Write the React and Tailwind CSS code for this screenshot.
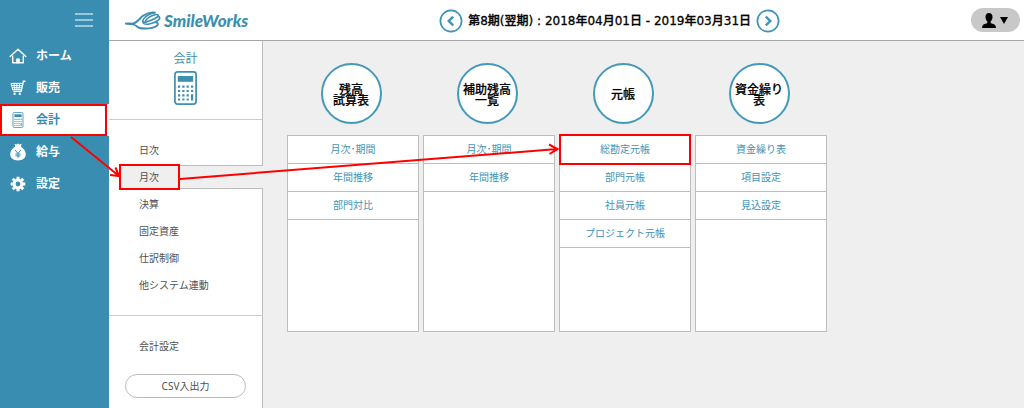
import React from "react";

function HomeIcon() {
  return (
    <svg viewBox="0 0 18 16" className="h-4 w-[18px]" fill="none" stroke="currentColor" strokeWidth="1.4" strokeLinejoin="round" strokeLinecap="round">
      <path d="M1.2 8.6 9 1.2l7.8 7.4M3.7 8.2v6.6h10.6V8.2" />
      <path d="M7.4 14.6v-3.8h3.2v3.8z" fill="currentColor" strokeWidth="0.6" />
    </svg>
  );
}

function CartIcon() {
  return (
    <svg viewBox="0 0 16 16" className="size-4" fill="none" stroke="currentColor" strokeWidth="1">
      <path d="M15.4 1.2h-2l-2.2 10.2H3.4" strokeWidth="1.4" />
      <path d="M.9 3.4h11.6M1.5 5.6h10.6M2.2 7.7h9.5M2.8 9.6h8.6" />
      <path d="M1 3.4l2 7M4 3.4l.9 7M6.8 3.4v7M9.6 3.4l-.7 7" />
      <circle cx="4.6" cy="13.8" r="1.2" fill="currentColor" stroke="none" />
      <circle cx="9.8" cy="13.8" r="1.2" fill="currentColor" stroke="none" />
    </svg>
  );
}

function CalculatorIcon({ className }) {
  return (
    <svg viewBox="0 0 23 34" className={className}>
      <rect x="0.9" y="0.9" width="21.2" height="32.2" rx="2.6" fill="white" stroke="currentColor" strokeWidth="1.7" />
      <rect x="3.8" y="5" width="15.4" height="5.8" fill="currentColor" />
      <path
        fill="currentColor"
        d="M4 14.6h2.2v2.2H4zM8.3 14.6h2.2v2.2H8.3zM12.6 14.6h2.2v2.2h-2.2zM17 14.6h2.2v2.2H17zM4 18.9h2.2v2.2H4zM8.3 18.9h2.2v2.2H8.3zM12.6 18.9h2.2v2.2h-2.2zM17 18.9h2.2v2.2H17zM4 23.2h2.2v2.2H4zM8.3 23.2h2.2v2.2H8.3zM12.6 23.2h2.2v2.2h-2.2zM4 27.4h2.2v2.2H4zM8.3 27.4h2.2v2.2H8.3zM12.6 27.4h2.2v2.2h-2.2zM17 23.2h2.2v6.4H17z"
      />
    </svg>
  );
}

function MoneyBagIcon() {
  return (
    <svg viewBox="0 0 16 18" className="h-[18px] w-4">
      <path d="M4.6.8 6.4 1.6 8 .6l1.6 1L11.6.8 10.8 4H5.2z" fill="currentColor" />
      <path d="M5 3.8h6c2.8 1.8 4.8 4.4 4.8 7.5 0 3.9-3.2 6.2-7.8 6.2S.2 15.2.2 11.3c0-3.1 2-5.7 4.8-7.5z" fill="currentColor" />
      <path d="M5.2 7 8 10.6 10.8 7M8 10.6v4.2M5.4 11h5.2M5.4 12.9h5.2" fill="none" stroke="#398db0" strokeWidth="1" />
    </svg>
  );
}

function GearIcon() {
  return (
    <svg viewBox="0 0 16 16" className="size-4" fill="none" stroke="currentColor">
      <circle cx="8" cy="8" r="3.9" strokeWidth="3" />
      <path
        strokeWidth="3"
        d="M8 .7v3M8 12.3v3M.7 8h3M12.3 8h3M2.8 2.8l2 2M11.2 11.2l2 2M13.2 2.8l-2 2M4.8 11.2l-2 2"
      />
    </svg>
  );
}

function BirdMark() {
  return (
    <svg viewBox="0 0 36 19" className="h-[19px] w-9" fill="none" stroke="currentColor" strokeLinecap="round" strokeLinejoin="round">
      <path d="M.9 12.4c2.6-.4 4.6.7 7.4.1C12.5 11.6 14.5 7.4 18 4.8 21.5 2.4 26 .9 29.8 1.6" strokeWidth="1.9" />
      <path d="M1.5 12.9c4.500-.3 8.500.6 10.500 2.600 1.500 1.500 4.500 2.100 8 2 5.500-.1 10.500-1.200 12.300-3.200 1.200-1.500.4-2.600-1.300-2.900" strokeWidth="1.9" />
      <path d="M29.8 1.6C25.5 2.2 20 5 18.3 8.3c-1.300 2.500.4 3.700 3.300 2.700C25.6 9.6 31.5 7.6 33 5.3c.8-1.500-.7-2.100-3-1.500-4 1-7.500 3-9.500 6" strokeWidth="1.6" />
      <path d="M33 5.4c2 .2 2.200 1.900.8 3.200-2.500 2.300-6.800 4-11 4.600-2.800.4-4.800-.4-4.800-2.400" strokeWidth="1.6" />
    </svg>
  );
}

const navItems = [
  { label: "ホーム", icon: <HomeIcon /> },
  { label: "販売", icon: <CartIcon /> },
  { label: "会計", icon: <CalculatorIcon className="h-4 w-3" />, active: true },
  { label: "給与", icon: <MoneyBagIcon /> },
  { label: "設定", icon: <GearIcon /> },
];

const subItems = ["日次", "月次", "決算", "固定資産", "仕訳制御", "他システム連動"];

const columns = [
  { title: ["残高", "試算表"], links: ["月次･期間", "年間推移", "部門対比"] },
  { title: ["補助残高", "一覧"], links: ["月次･期間", "年間推移"] },
  { title: ["元帳"], links: ["総勘定元帳", "部門元帳", "社員元帳", "プロジェクト元帳"], marked: 0 },
  { title: ["資金繰り", "表"], links: ["資金繰り表", "項目設定", "見込設定"] },
];

function Sidebar() {
  return (
    <aside className="w-[109px] shrink-0 bg-[#398db0] text-white">
      <div className="flex h-10 items-center justify-end pr-4">
        <button type="button" aria-label="メニュー" className="text-[#b9dbe8]">
          <svg viewBox="0 0 18 14" className="h-[14px] w-[18px]" stroke="currentColor" strokeWidth="1.5">
            <path d="M0 1h18M0 7h18M0 13h18" />
          </svg>
        </button>
      </div>
      <nav>
        {navItems.map((item) => (
          <a
            key={item.label}
            href="#"
            className={
              item.active
                ? "relative flex h-8 items-center gap-2 bg-white pl-2 text-xs font-bold text-[#398db0]"
                : "relative flex h-8 items-center gap-2 pl-2 text-xs font-bold"
            }
          >
            <span className="flex w-5 justify-center">{item.icon}</span>
            <span className="pb-[2px]">{item.label}</span>
            {item.active && <span className="absolute inset-y-0 right-[2px] left-0 border-2 border-[#f00]" />}
          </a>
        ))}
      </nav>
    </aside>
  );
}

function PeriodButton({ label, path }) {
  return (
    <button type="button" aria-label={label} className="text-[#3d93b6]">
      <svg viewBox="0 0 24 24" className="size-6" fill="none" stroke="currentColor">
        <circle cx="12" cy="12" r="10.6" strokeWidth="1.7" />
        <path d={path} strokeWidth="2.4" />
      </svg>
    </button>
  );
}

function Header() {
  return (
    <header className="flex h-[41px] items-center justify-between border-b border-[#a6a6a6] bg-white pr-1 pl-4">
      <a href="#" className="flex items-center gap-[3px] text-[#3d8fb0]">
        <BirdMark />
        <span className="pt-[2px] font-['Lato',sans-serif] text-[17px] leading-5 font-black italic">SmileWorks</span>
      </a>
      <div className="flex items-center gap-[5px] pt-[2px]">
        <PeriodButton label="前の期" path="M14.2 7.6 9.7 12l4.5 4.4" />
        <span className="font-['DejaVu_Sans','Noto_Sans_CJK_JP',sans-serif] text-xs font-medium text-black [-webkit-text-stroke:0.3px_black]">
          第8期(翌期) : 2018年04月01日 - 2019年03月31日
        </span>
        <PeriodButton label="次の期" path="M9.8 7.6l4.5 4.4-4.5 4.4" />
      </div>
      <button type="button" aria-label="ユーザー" className="flex h-6 w-[49px] items-center justify-center gap-1 rounded-full bg-[#c8c8c8] text-black">
        <svg viewBox="0 0 14 15" className="h-[15px] w-[14px]" fill="currentColor">
          <path d="M7 0c2.300 0 3.700 1.700 3.500 4.200-.1 1.900-.9 3.300-1.900 4.200 0 1.500.3 1.900 1.900 2.400 2.300.7 3.300 1.500 3.500 4.200H0c.2-2.700 1.200-3.500 3.500-4.200 1.600-.5 1.900-.9 1.900-2.400-1-.9-1.800-2.300-1.900-4.200C3.300 1.700 4.700 0 7 0z" />
        </svg>
        <svg viewBox="0 0 8 7" className="h-[7px] w-2" fill="currentColor">
          <path d="M0 0h8L4 7z" />
        </svg>
      </button>
    </header>
  );
}

function SubMenu() {
  return (
    <section className="w-[154px] shrink-0 border-r border-[#bdbdbd] bg-white font-['Noto_Sans','Noto_Sans_CJK_JP',sans-serif] text-[10px] text-[#505050]">
      <div className="flex flex-col items-center border-b border-[#ccc] pt-2 pb-[14px] text-[#3d8fb0]">
        <h1 className="text-xs leading-5">会計</h1>
        <CalculatorIcon className="mt-[2px] h-[34px] w-[23px]" />
      </div>
      <nav className="-mr-px flex flex-col gap-[3px] border-b border-[#ccc] py-[18px] pl-[10px]">
        {subItems.map((label) => (
          <a
            key={label}
            href="#"
            className={
              label === "月次"
                ? "relative flex h-6 items-center border-y border-[#bdbdbd] bg-[#efefef] pl-5"
                : "flex h-6 items-center pl-5"
            }
          >
            {label}
            {label === "月次" && <span className="absolute -inset-y-[2px] left-0 w-[61px] border-2 border-[#f00]" />}
          </a>
        ))}
      </nav>
      <div className="flex flex-col px-4 pt-[18px] pb-2">
        <a href="#" className="flex h-6 items-center pl-[14px]">
          会計設定
        </a>
        <button type="button" className="mt-4 h-6 rounded-full border border-[#bbb]">
          CSV入出力
        </button>
      </div>
    </section>
  );
}

function Column({ title, links, marked }) {
  return (
    <div className="flex flex-col items-center gap-[11px]">
      <h2 className="mr-1 flex size-[61px] flex-col items-center justify-center rounded-full border-2 border-[#4499b9] bg-white text-xs leading-[11px] font-medium text-black [-webkit-text-stroke:0.2px_black]">
        {title.map((line) => (
          <span key={line}>{line}</span>
        ))}
      </h2>
      <ul className="min-h-[197px] w-full border border-[#bdbdbd] bg-white text-[10px] text-[#3d93b6]">
        {links.map((label, i) => (
          <li key={label} className="relative border-b border-[#bdbdbd]">
            <a href="#" className="flex h-[27px] items-center justify-center pb-[2px]">
              {label}
            </a>
            {i === marked && <span className="pointer-events-none absolute -inset-x-px -inset-y-[2px] border-2 border-[#f00]" />}
          </li>
        ))}
      </ul>
    </div>
  );
}

export default function App() {
  return (
    <div className="relative flex min-h-screen bg-[#efefef] font-['Noto_Sans_CJK_JP',sans-serif]">
      <Sidebar />
      <div className="flex min-w-0 flex-1 flex-col">
        <Header />
        <div className="flex flex-1">
          <SubMenu />
          <main className="min-w-0 flex-1 pt-[22px] pl-6">
            <div className="grid max-w-[540px] grid-cols-4 gap-1">
              {columns.map((column) => (
                <Column key={column.title.join("")} {...column} />
              ))}
            </div>
          </main>
        </div>
      </div>
      <svg viewBox="0 0 1024 408" className="pointer-events-none absolute top-0 left-0 h-[408px] w-[1024px]" fill="none" stroke="#f00" strokeWidth="2">
        <path d="M71 137l48 39M110 175l9 1-3.5-8.5" />
        <path d="M180 179l377-30M549 144.5l8.5 4.5-8 5" />
      </svg>
    </div>
  );
}
